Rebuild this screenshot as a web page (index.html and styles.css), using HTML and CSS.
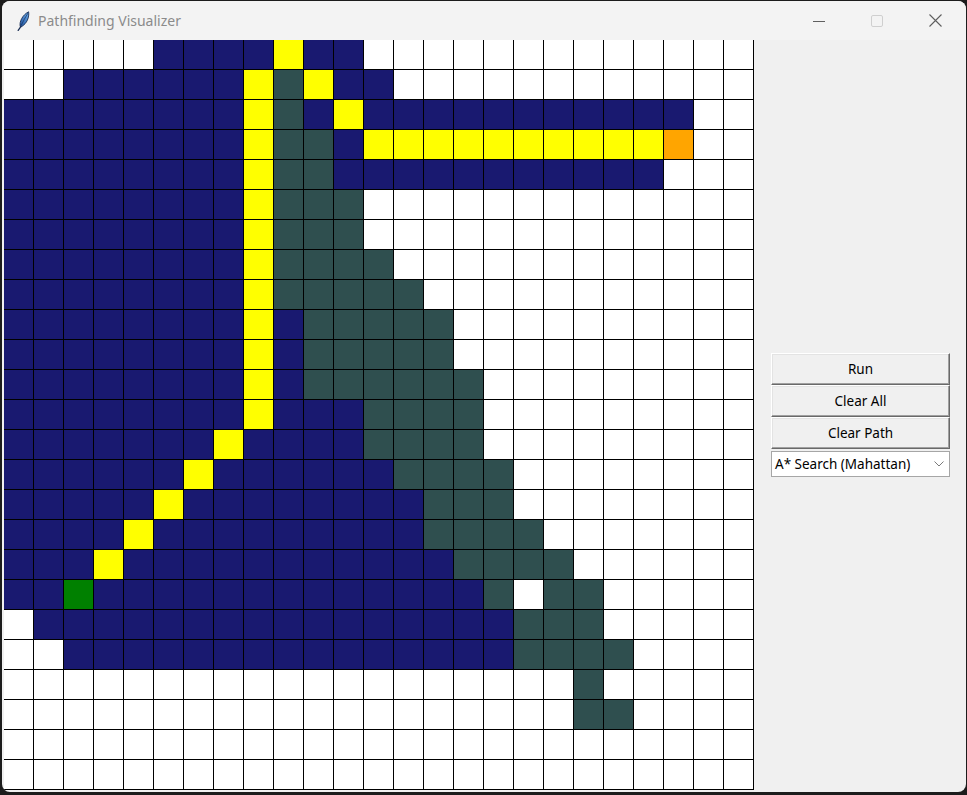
FILE: index.html
```html
<!DOCTYPE html>
<html>
<head>
<meta charset="utf-8">
<title>Pathfinding Visualizer</title>
<link rel="stylesheet" href="styles.css">
</head>
<body>
<div class="window">
  <div class="titlebar">
    <svg class="app-icon" width="14" height="20" viewBox="0 0 14 20">
      <defs>
        <linearGradient id="fg" x1="0" y1="1" x2="1" y2="0">
          <stop offset="0" stop-color="#1d4f9c"/>
          <stop offset="1" stop-color="#6fb2f0"/>
        </linearGradient>
      </defs>
      <path d="M4.2 15.5 C3.2 10.5 6.5 4 12.6 0.8 C13.4 6.2 11 12.4 5.6 15.6 Z" fill="url(#fg)" stroke="#1b2f55" stroke-width="0.9"/>
      <path d="M5 15.4 L2.2 19.4" stroke="#1b2f55" stroke-width="1.3" stroke-linecap="round"/>
      <path d="M5.2 14.4 C7 10.5 9.5 6 12 2" stroke="#16305c" stroke-width="0.7" fill="none"/>
    </svg>
    <span class="title">Pathfinding Visualizer</span>
    <div class="controls">
      <span class="ctl"><svg width="12" height="12" viewBox="0 0 12 12"><path d="M0 6.5 H12" stroke="#5f5f5f" stroke-width="1"/></svg></span>
      <span class="ctl"><svg width="12" height="12" viewBox="0 0 12 12"><rect x="0.5" y="0.5" width="11" height="11" rx="1.5" fill="none" stroke="#cfcfcf" stroke-width="1"/></svg></span>
      <span class="ctl"><svg width="13" height="13" viewBox="0 0 13 13"><path d="M0.5 0.5 L12.5 12.5 M12.5 0.5 L0.5 12.5" stroke="#5f5f5f" stroke-width="1.1"/></svg></span>
    </div>
  </div>
  <div class="client">
    <div class="board" id="board"></div>
    <div class="panel">
      <button class="btn">Run</button>
      <button class="btn">Clear All</button>
      <button class="btn">Clear Path</button>
      <div class="combo">
        <span class="combo-text">A* Search (Mahattan)</span>
        <svg class="chev" width="10" height="6" viewBox="0 0 10 6"><path d="M0.5 0.5 L5 5 L9.5 0.5" fill="none" stroke="#7a7a7a" stroke-width="1"/></svg>
      </div>
    </div>
  </div>
</div>
<script src="script.js"></script>
</body>
</html>
```

FILE: styles.css
```css
html, body {
  margin: 0;
  padding: 0;
}
body {
  background: #1c1c1c;
  width: 967px;
  height: 795px;
  overflow: hidden;
  font-family: "Noto Sans", "Open Sans", sans-serif;
}
.window {
  margin: 1px 0 0 2px;
  width: 964px;
  height: 791px;
  background: #f0f0f0;
  border-radius: 8px;
  overflow: hidden;
  display: flex;
  flex-direction: column;
}
.titlebar {
  height: 39px;
  flex: none;
  background: #f3f3f3;
  display: flex;
  align-items: center;
}
.app-icon {
  margin-left: 14px;
  flex: none;
}
.title {
  margin-left: 8px;
  font-size: 14px;
  color: #8b8b8b;
}
.controls {
  margin-left: auto;
  display: flex;
  height: 100%;
  padding-right: 2px;
}
.ctl {
  width: 58px;
  display: flex;
  align-items: center;
  justify-content: center;
}
.client {
  display: flex;
  padding-left: 2px;
}
.board {
  display: grid;
  grid-template-columns: repeat(25, 30px);
  grid-auto-rows: 30px;
  width: 750px;
  height: 750px;
  flex: none;
}
.board i {
  display: block;
  box-sizing: border-box;
  border-right: 1px solid #000;
  border-bottom: 1px solid #000;
  background: #fff;
}
.board i.n { background: #191970; }
.board i.y { background: #ffff00; }
.board i.s { background: #2f4f4f; }
.board i.g { background: #008000; }
.board i.o { background: #ffa500; }
.panel {
  flex: 1;
  display: flex;
  flex-direction: column;
  justify-content: center;
  padding: 0 16px 0 17px;
}
.btn {
  height: 32px;
  margin: 0;
  padding: 0;
  font-family: "Noto Sans", "Open Sans", sans-serif;
  font-size: 13.5px;
  color: #000;
  background: #f0f0f0;
  border-style: solid;
  border-width: 1px;
  border-color: #ffffff #696969 #696969 #ffffff;
  box-shadow: inset -1px -1px 0 #a0a0a0, inset 1px 1px 0 #e3e3e3;
}
.combo {
  margin-top: 2px;
  height: 26px;
  box-sizing: border-box;
  background: #fff;
  border: 1px solid #a6a6a6;
  display: flex;
  align-items: center;
  padding: 0 5px 0 3px;
}
.combo-text {
  font-size: 13.5px;
  color: #000;
}
.chev {
  margin-left: auto;
}
```

FILE: script.js
```js
(function () {
  var rows = [
    "wwwwwnnnnynnwwwwwwwwwwwww",
    "wwnnnnnnysynnwwwwwwwwwwww",
    "nnnnnnnnysnynnnnnnnnnnnww",
    "nnnnnnnnyssnyyyyyyyyyyoww",
    "nnnnnnnnyssnnnnnnnnnnnwww",
    "nnnnnnnnyssswwwwwwwwwwwww",
    "nnnnnnnnyssswwwwwwwwwwwww",
    "nnnnnnnnysssswwwwwwwwwwww",
    "nnnnnnnnyssssswwwwwwwwwww",
    "nnnnnnnnynssssswwwwwwwwww",
    "nnnnnnnnynssssswwwwwwwwww",
    "nnnnnnnnynsssssswwwwwwwww",
    "nnnnnnnnynnnsssswwwwwwwww",
    "nnnnnnnynnnnsssswwwwwwwww",
    "nnnnnnynnnnnnsssswwwwwwww",
    "nnnnnynnnnnnnnssswwwwwwww",
    "nnnnynnnnnnnnnsssswwwwwww",
    "nnnynnnnnnnnnnnsssswwwwww",
    "nngnnnnnnnnnnnnnswsswwwww",
    "wnnnnnnnnnnnnnnnnssswwwww",
    "wwnnnnnnnnnnnnnnnsssswwww",
    "wwwwwwwwwwwwwwwwwwwswwwww",
    "wwwwwwwwwwwwwwwwwwwsswwww",
    "wwwwwwwwwwwwwwwwwwwwwwwww",
    "wwwwwwwwwwwwwwwwwwwwwwwww"
  ];
  var board = document.getElementById("board");
  var html = "";
  for (var r = 0; r < rows.length; r++) {
    for (var c = 0; c < 25; c++) {
      var k = rows[r].charAt(c) || "w";
      html += '<i class="' + k + '"></i>';
    }
  }
  board.innerHTML = html;
})();
```
